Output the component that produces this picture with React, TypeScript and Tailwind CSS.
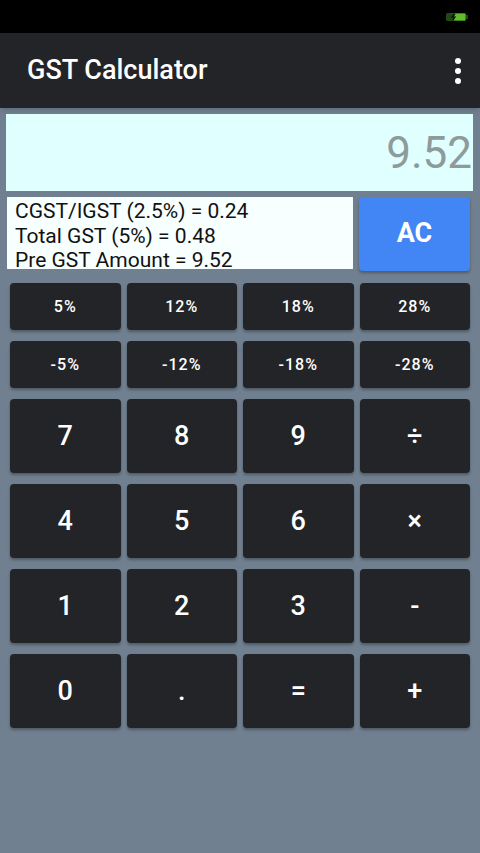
import React from "react";

const small = ["5%", "12%", "18%", "28%", "-5%", "-12%", "-18%", "-28%"];
const big = ["7", "8", "9", "÷", "4", "5", "6", "×", "1", "2", "3", "-", "0", ".", "=", "+"];

export default function App() {
  return (
    <div className="w-[480px] h-[853px] bg-[#708090] flex flex-col overflow-hidden" style={{ fontFamily: "Roboto, 'Noto Sans', sans-serif" }}>
      <div className="h-[33px] bg-black flex items-center justify-end pr-[12px]">
        <svg width="22" height="10" viewBox="0 0 22 10">
          <rect x="0" y="1" width="20" height="8" rx="1.5" fill="#1f4a12" />
          <rect x="20" y="3" width="2" height="4" fill="#1f4a12" />
          <rect x="8" y="1.5" width="11.5" height="7" rx="1" fill="#5fbf2a" />
          <path d="M9 2 L6 5 L9 5 L7 8" stroke="#000" strokeWidth="1.2" fill="none" />
        </svg>
      </div>
      <div className="h-[75px] bg-[#232428] flex items-center justify-between pl-[27px] pr-[16px] shadow-md">
        <span className="text-white text-[27px] font-medium">GST Calculator</span>
        <div className="flex flex-col gap-[4px] items-center w-[12px]">
          <span className="w-[6px] h-[6px] rounded-full bg-white" />
          <span className="w-[6px] h-[6px] rounded-full bg-white" />
          <span className="w-[6px] h-[6px] rounded-full bg-white" />
        </div>
      </div>
      <div className="pl-[6px] pr-[7px] pt-[6px]">
        <div className="h-[77px] bg-[#e0ffff] flex items-center justify-end overflow-hidden">
          <span className="text-[44px] text-[#8d9b9b] leading-none mr-[1px]">9.52</span>
        </div>
      </div>
      <div className="flex pl-[7px] pr-[10px] pt-[6px] gap-[6px]">
        <div className="w-[346px] h-[72px] bg-[#f8ffff] pl-[8px] pt-[2px] overflow-hidden text-[21px] leading-[24.5px] text-[#111]">
          <div>CGST/IGST (2.5%) = 0.24</div>
          <div>Total GST (5%) = 0.48</div>
          <div>Pre GST Amount = 9.52</div>
        </div>
        <button className="flex-1 h-[74px] rounded-[4px] bg-[#4285f4] text-white text-[27px] font-bold shadow-[0_2px_3px_rgba(0,0,0,0.3)] flex items-center justify-center pb-[2px]">
          AC
        </button>
      </div>
      <div className="px-[10px] pt-[12px] grid grid-cols-4 gap-x-[6px] gap-y-[11px]">
        {small.map((s) => (
          <button key={s} className="h-[47px] rounded-[4px] bg-[#232428] text-white text-[16px] font-medium tracking-[1px] shadow-[0_2px_3px_rgba(0,0,0,0.3)] flex items-center justify-center">
            {s}
          </button>
        ))}
        {big.map((s) => (
          <button key={s} className="h-[74px] rounded-[4px] bg-[#232428] text-white text-[27px] font-medium shadow-[0_2px_3px_rgba(0,0,0,0.3)] flex items-center justify-center">
            {s}
          </button>
        ))}
      </div>
    </div>
  );
}
